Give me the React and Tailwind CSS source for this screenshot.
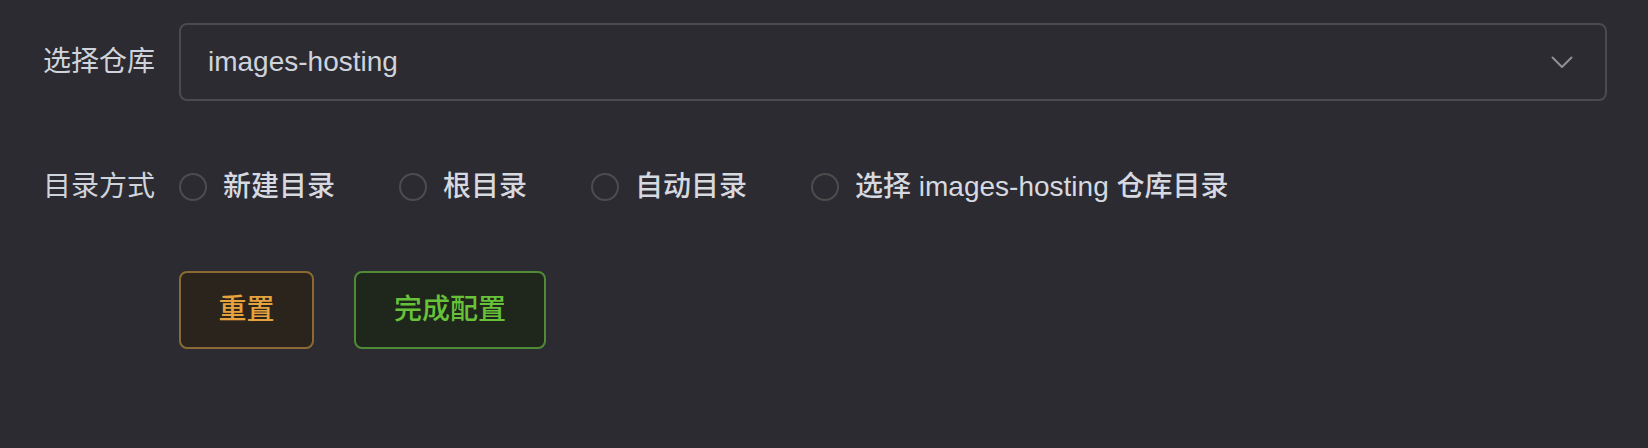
import React from "react";

const font = { fontFamily: '"Liberation Sans", "Noto Sans CJK SC", sans-serif' };

function Radio({ label }) {
  return (
    <label className="flex items-center mr-[64px] cursor-pointer">
      <span className="w-[28px] h-[28px] rounded-full border-2 border-[#4c4d4f] bg-[#2c2b31] shrink-0" />
      <span className="pl-[16px] text-[28px] leading-none font-medium text-[#d6d9e0]">{label}</span>
    </label>
  );
}

export default function App() {
  return (
    <div className="w-[1648px] h-[448px] bg-[#2c2b31] pt-[23px] pr-[41px]" style={font}>
      <div className="flex items-center h-[78px]">
        <div className="w-[179px] shrink-0 pr-[24px] text-right text-[28px] leading-none text-[#cfd3dc]">选择仓库</div>
        <div className="flex-1 h-[78px] rounded-[8px] border-2 border-[#4a4a50] flex items-center pl-[27px] pr-[32px]">
          <span className="flex-1 text-[28px] leading-none text-[#cfd3dc]">images-hosting</span>
          <svg width="22" height="13" viewBox="0 0 22 13" fill="none">
            <path d="M1.5 1.5 L11 11 L20.5 1.5" stroke="#8d9095" strokeWidth="2" strokeLinecap="round" strokeLinejoin="round" />
          </svg>
        </div>
      </div>

      <div className="flex items-center h-[78px] mt-[47px]">
        <div className="w-[179px] shrink-0 pr-[24px] text-right text-[28px] leading-none text-[#cfd3dc]">目录方式</div>
        <div className="flex items-center">
          <Radio label="新建目录" />
          <Radio label="根目录" />
          <Radio label="自动目录" />
          <Radio label="选择 images-hosting 仓库目录" />
        </div>
      </div>

      <div className="flex items-center mt-[45px] pl-[179px] gap-[40px]">
        <button className="w-[135px] h-[78px] rounded-[8px] border-2 border-[#8a6a32] bg-[#2b241d] text-[#e6a23c] text-[28px] font-medium leading-none">
          重置
        </button>
        <button className="w-[192px] h-[78px] rounded-[8px] border-2 border-[#4f8a37] bg-[#1f261c] text-[#67c23a] text-[28px] font-medium leading-none">
          完成配置
        </button>
      </div>
    </div>
  );
}
